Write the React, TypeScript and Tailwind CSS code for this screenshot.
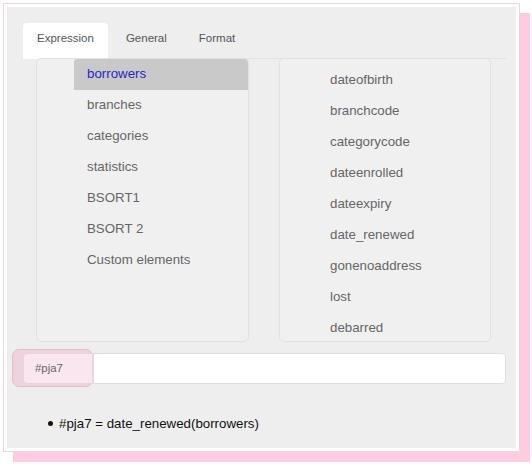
import React from 'react';

const tables = ['borrowers', 'branches', 'categories', 'statistics', 'BSORT1', 'BSORT 2', 'Custom elements'];
const columns = [
  'dateofbirth',
  'branchcode',
  'categorycode',
  'dateenrolled',
  'dateexpiry',
  'date_renewed',
  'gonenoaddress',
  'lost',
  'debarred',
];

const App: React.FC = () => {
  return (
    <div
      className="w-[532px] h-[464px] bg-white overflow-hidden pt-[3px] pl-[3px]"
      style={{ fontFamily: '"Liberation Sans", Arial, sans-serif' }}
    >
      {/* Panel with pink offset shadow */}
      <div className="w-[517px] h-[449px] border border-[#f1d6e1] bg-white p-[3px] shadow-[10px_10px_0_#fdcce0]">
        <div className="h-full bg-[#eeeeee] pl-[16px] pt-[16px]">
          <div className="w-[483px]">
            {/* Tabs */}
            <div className="flex gap-[4px] h-[36px] border-b border-[#e2e2e2] text-[11.5px] text-[#555]">
              <div className="h-[36px] px-[14px] bg-white rounded-t-[4px] flex items-center pb-[4px]">Expression</div>
              <div className="h-[35px] px-[14px] flex items-center pb-[4px]">General</div>
              <div className="h-[35px] px-[14px] flex items-center pb-[4px]">Format</div>
            </div>

            {/* Lists */}
            <div className="flex gap-[30px] pl-[13px] -mt-[1px] text-[13.3px] text-[#666]">
              <div className="w-[213px] h-[284px] bg-[#f0f0f0] border border-[#e1e1e1] rounded-[5px] overflow-hidden">
                <ul className="pl-[37px]">
                  {tables.map((t, i) => (
                    <li
                      key={t}
                      className={
                        i === 0
                          ? 'h-[31px] flex items-center pl-[13px] pb-[1px] bg-[#c9c9c9] text-[#2626c4] rounded-tl-[3px]'
                          : 'h-[31px] flex items-center pl-[13px] pb-[1px]'
                      }
                    >
                      {t}
                    </li>
                  ))}
                </ul>
              </div>
              <div className="w-[212px] h-[284px] bg-[#f0f0f0] border border-[#e1e1e1] rounded-[5px] overflow-hidden">
                <ul className="pl-[37px] pt-[6px]">
                  {columns.map((c) => (
                    <li key={c} className="h-[30.9px] flex items-center pl-[13px]">
                      {c}
                    </li>
                  ))}
                </ul>
              </div>
            </div>

            {/* Expression input */}
            <div className="flex mt-[11px] h-[31px] relative">
              <div className="absolute left-[-11px] top-[-4px] w-[81px] h-[38px] rounded-[7px] bg-[#ecd3dd] border border-[#e2bfcd]" />
              <div className="relative w-[70px] h-[31px] bg-[#f9e6ee] border border-[#ead3dc] rounded-l-[4px] flex items-center pl-[11px] text-[11.4px] text-[#666]">
                #pja7
              </div>
              <div className="flex-1 h-[31px] bg-white border border-[#dedede] rounded-r-[4px]" />
            </div>

            {/* Result */}
            <div className="mt-[30px] flex items-center h-[19px] text-[13.3px] text-[#111]">
              <div className="ml-[25px] w-[5px] h-[5px] rounded-full bg-[#111]" />
              <span className="ml-[6px]">#pja7 = date_renewed(borrowers)</span>
            </div>
          </div>
        </div>
      </div>
    </div>
  );
};

export default App;
